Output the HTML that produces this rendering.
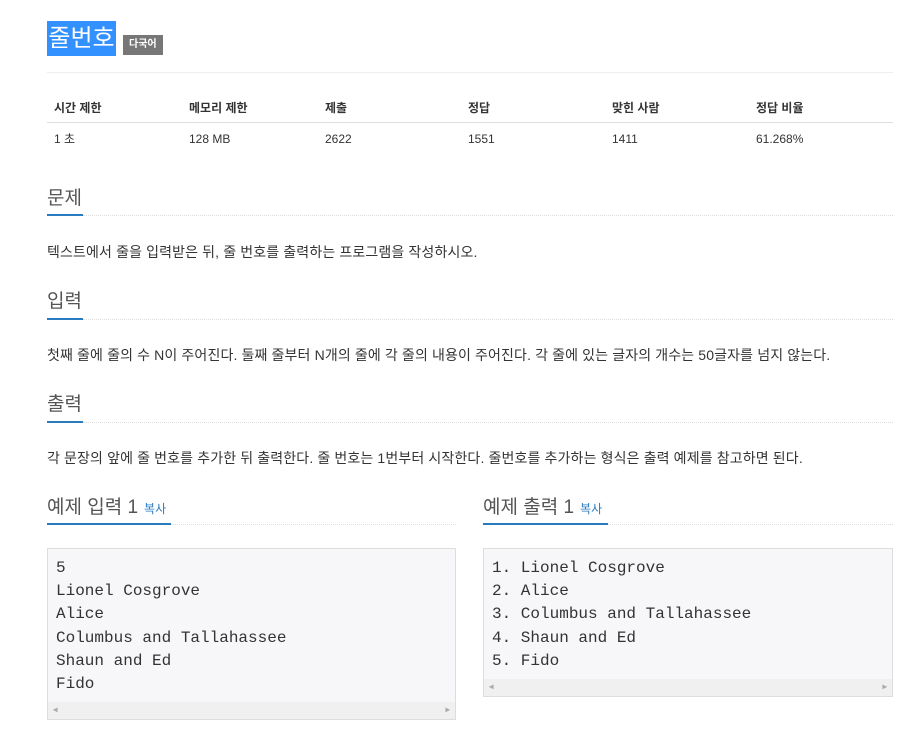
<!DOCTYPE html>
<html><head><meta charset="utf-8"><style>
body{margin:0;background:#fff;font-family:"Liberation Sans","Noto Sans CJK KR",sans-serif;color:#333;width:919px;height:740px;overflow:hidden;position:relative}
.a{position:absolute}
.title{left:47px;top:21px;width:69px;height:35px;background:#3390ff;color:#fff;font-size:24px;line-height:35px;text-align:center;white-space:nowrap;overflow:hidden}
.badge{left:123px;top:35px;height:20px;background:#777;color:#fff;font-size:10px;font-weight:bold;line-height:20px;padding:0 6px}
.hr{left:47px;width:846px;height:1px;background:#eee}
.th{font-size:12px;font-weight:bold;top:99px}
.td{font-size:12px;top:132px}
.h{font-size:19px;color:#555;left:47px}
.ul{height:2px;background:#2a7ac0}
.dot{border-top:1px dotted #ddd;height:0}
.p{font-size:14px;left:47px;color:#333;white-space:nowrap;letter-spacing:0.13px}
pre{margin:0;position:absolute;top:548px;background:#f7f7f9;border:1px solid #ddd;font-family:"Liberation Mono",monospace;font-size:16px;line-height:23.2px;padding:8px 8px 0 8px;box-sizing:border-box;color:#333;overflow:hidden}
.sb{position:absolute;left:0;right:0;bottom:0;height:17px;background:#f0f0f0;color:#aaa;font-size:8px;line-height:17px}
.h small{font-size:12px;color:#2a7ac0;margin-left:6px}
</style></head><body>
<div class="a title">줄번호</div>
<div class="a badge">다국어</div>
<div class="a hr" style="top:72px"></div>
<div class="a th" style="left:54px">시간 제한</div>
<div class="a th" style="left:189px">메모리 제한</div>
<div class="a th" style="left:325px">제출</div>
<div class="a th" style="left:468px">정답</div>
<div class="a th" style="left:612px">맞힌 사람</div>
<div class="a th" style="left:756px">정답 비율</div>
<div class="a hr" style="top:122px;background:#ddd;height:1px"></div>
<div class="a td" style="left:54px;top:130px">1 초</div>
<div class="a td" style="left:189px">128 MB</div>
<div class="a td" style="left:325px">2622</div>
<div class="a td" style="left:468px">1551</div>
<div class="a td" style="left:612px">1411</div>
<div class="a td" style="left:756px">61.268%</div>

<div class="a h" style="top:183px">문제</div>
<div class="a ul" style="left:47px;top:214px;width:36px"></div>
<div class="a dot" style="left:83px;top:215px;width:810px"></div>
<div class="a p" style="top:242px">텍스트에서 줄을 입력받은 뒤, 줄 번호를 출력하는 프로그램을 작성하시오.</div>

<div class="a h" style="top:286px">입력</div>
<div class="a ul" style="left:47px;top:318px;width:36px"></div>
<div class="a dot" style="left:83px;top:319px;width:810px"></div>
<div class="a p" style="top:345px">첫째 줄에 줄의 수 N이 주어진다. 둘째 줄부터 N개의 줄에 각 줄의 내용이 주어진다. 각 줄에 있는 글자의 개수는 50글자를 넘지 않는다.</div>

<div class="a h" style="top:389px">출력</div>
<div class="a ul" style="left:47px;top:421px;width:36px"></div>
<div class="a dot" style="left:83px;top:422px;width:810px"></div>
<div class="a p" style="top:448px">각 문장의 앞에 줄 번호를 추가한 뒤 출력한다. 줄 번호는 1번부터 시작한다. 줄번호를 추가하는 형식은 출력 예제를 참고하면 된다.</div>

<div class="a h" style="top:492px">예제 입력 1<small>복사</small></div>
<div class="a ul" style="left:47px;top:523px;width:124px"></div>
<div class="a dot" style="left:171px;top:524px;width:285px"></div>
<div class="a h" style="top:492px;left:483px">예제 출력 1<small>복사</small></div>
<div class="a ul" style="left:483px;top:523px;width:125px"></div>
<div class="a dot" style="left:608px;top:524px;width:285px"></div>

<pre style="left:47px;width:409px;height:172px">5
Lionel Cosgrove
Alice
Columbus and Tallahassee
Shaun and Ed
Fido<div class="sb">&nbsp;◀<span style="float:right">▶&nbsp;</span></div></pre>
<pre style="left:483px;width:410px;height:149px">1. Lionel Cosgrove
2. Alice
3. Columbus and Tallahassee
4. Shaun and Ed
5. Fido<div class="sb">&nbsp;◀<span style="float:right">▶&nbsp;</span></div></pre>
</body></html>
